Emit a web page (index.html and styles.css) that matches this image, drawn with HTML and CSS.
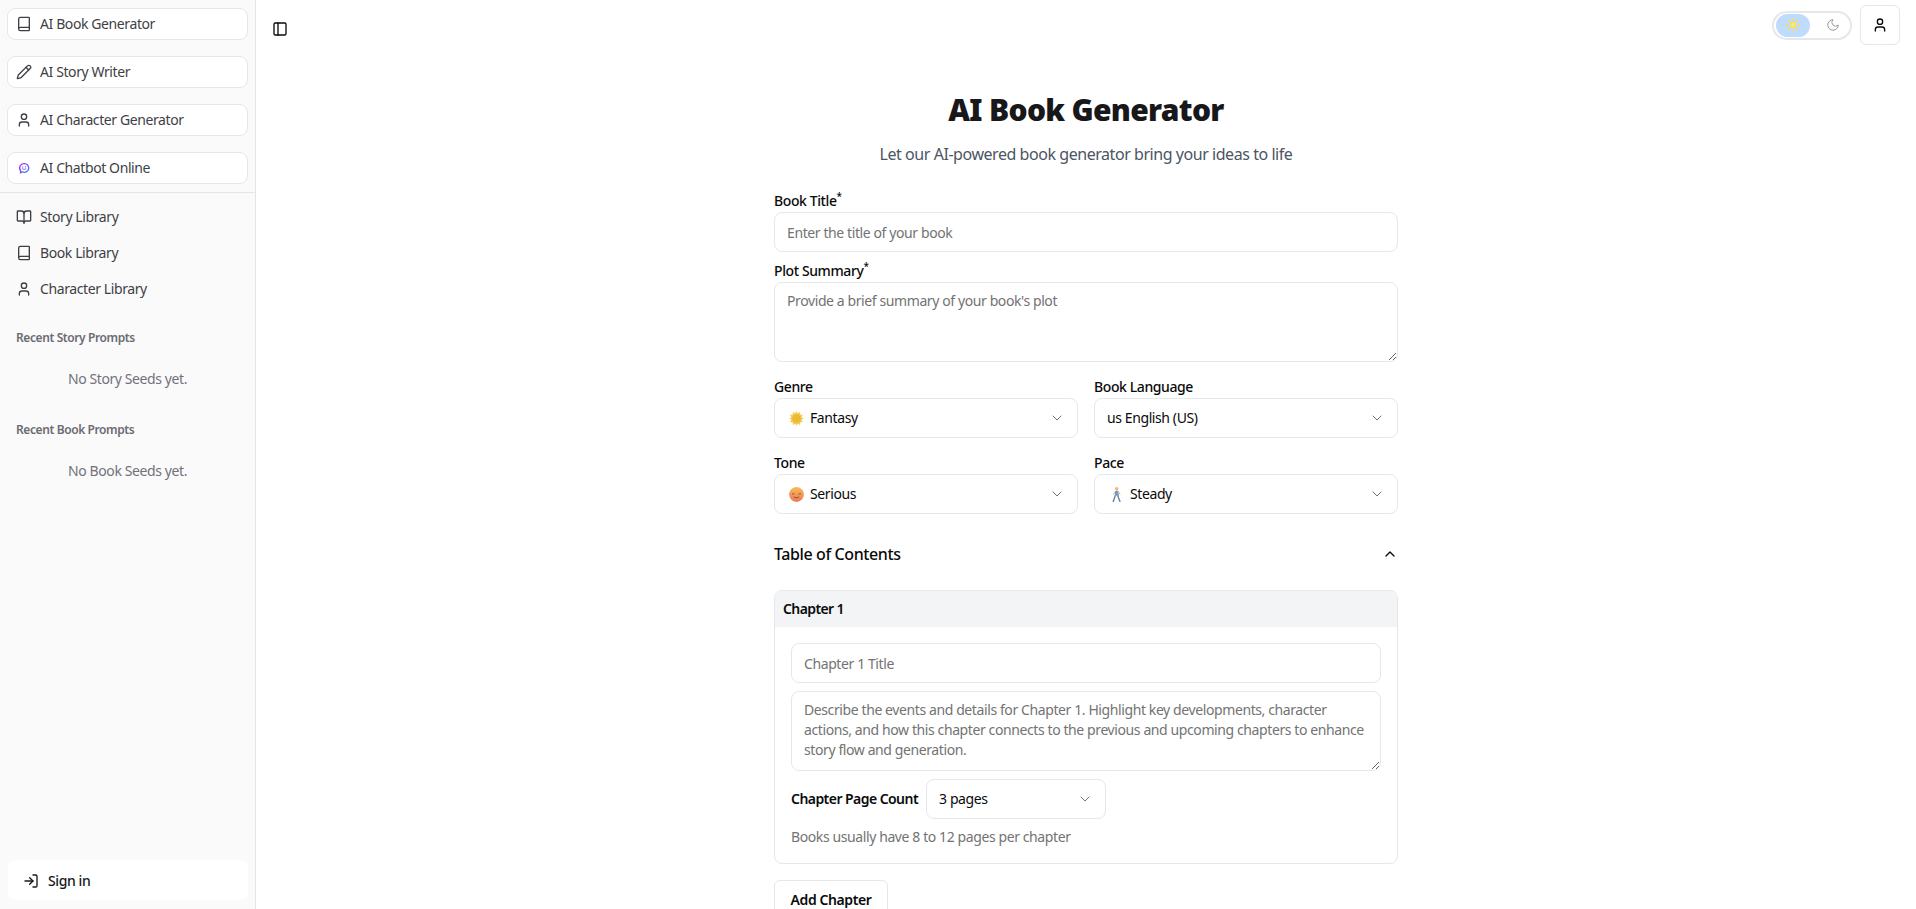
FILE: index.html
```html
<!DOCTYPE html>
<html lang="en">
<head>
  <meta charset="UTF-8">
  <meta name="viewport" content="width=device-width, initial-scale=1.0">
  <title>AI Book Generator</title>
  <link rel="stylesheet" href="styles.css">
</head>
<body>

<svg class="icon-defs" width="0" height="0">
  <symbol id="i-book" viewBox="0 0 24 24"><path d="M4 19.5v-15A2.5 2.5 0 0 1 6.5 2H19a1 1 0 0 1 1 1v18a1 1 0 0 1-1 1H6.5a1 1 0 0 1 0-5H20"/></symbol>
  <symbol id="i-pencil" viewBox="0 0 24 24"><path d="M21.174 6.812a1 1 0 0 0-3.986-3.987L3.842 16.174a2 2 0 0 0-.5.83l-1.321 4.352a.5.5 0 0 0 .623.622l4.353-1.32a2 2 0 0 0 .83-.497z"/><path d="m15 5 4 4"/></symbol>
  <symbol id="i-user" viewBox="0 0 24 24"><path d="M19 21v-2a4 4 0 0 0-4-4H9a4 4 0 0 0-4 4v2"/><circle cx="12" cy="7" r="4"/></symbol>
  <symbol id="i-open" viewBox="0 0 24 24"><path d="M12 7v14"/><path d="M3 18a1 1 0 0 1-1-1V4a1 1 0 0 1 1-1h5a4 4 0 0 1 4 4 4 4 0 0 1 4-4h5a1 1 0 0 1 1 1v13a1 1 0 0 1-1 1h-6a3 3 0 0 0-3 3 3 3 0 0 0-3-3z"/></symbol>
  <symbol id="i-down" viewBox="0 0 24 24"><path d="m6 9 6 6 6-6"/></symbol>
</svg>

<div class="app">
  <aside class="sidebar">
    <nav class="tools">
      <a class="tool"><svg class="icon"><use href="#i-book"/></svg>AI Book Generator</a>
      <a class="tool"><svg class="icon"><use href="#i-pencil"/></svg>AI Story Writer</a>
      <a class="tool"><svg class="icon"><use href="#i-user"/></svg>AI Character Generator</a>
      <a class="tool">
        <svg class="icon chat-icon" viewBox="0 0 16 16">
          <defs><linearGradient id="chatGrad" x1="0" y1="0" x2="1" y2="1"><stop offset="0" stop-color="#c026d3"/><stop offset="1" stop-color="#3b82f6"/></linearGradient></defs>
          <path d="M8.300 3.700a4.300 4.300 0 1 1-1.900 8.100L4.400 13l.3-2.200a4.300 4.300 0 0 1 3.600-7.100z" fill="none" stroke="url(#chatGrad)" stroke-width="1.300"/>
          <path d="M6.300 8.900q1.800 1.300 3.600 0" fill="none" stroke="#6366f1" stroke-width=".9"/>
          <circle cx="6.700" cy="6.900" r=".7" fill="#a855f7"/><circle cx="9.500" cy="6.900" r=".7" fill="#3b82f6"/>
        </svg>
        AI Chatbot Online
      </a>
    </nav>
    <nav class="library">
      <a class="lib-link"><svg class="icon"><use href="#i-open"/></svg>Story Library</a>
      <a class="lib-link"><svg class="icon"><use href="#i-book"/></svg>Book Library</a>
      <a class="lib-link"><svg class="icon"><use href="#i-user"/></svg>Character Library</a>
    </nav>
    <section class="recent recent-story">
      <h3>Recent Story Prompts</h3>
      <p>No Story Seeds yet.</p>
    </section>
    <section class="recent recent-book">
      <h3>Recent Book Prompts</h3>
      <p>No Book Seeds yet.</p>
    </section>
    <a class="sign-in">
      <svg class="icon" viewBox="0 0 24 24"><path d="M15 3h4a2 2 0 0 1 2 2v14a2 2 0 0 1-2 2h-4"/><path d="m10 17 5-5-5-5"/><path d="M15 12H3"/></svg>
      Sign in
    </a>
  </aside>

  <div class="main">
    <header class="topbar">
      <button class="panel-toggle">
        <svg class="icon" viewBox="0 0 24 24"><rect x="3" y="3" width="18" height="18" rx="2"/><path d="M9 3v18"/></svg>
      </button>
      <div class="topbar-right">
        <div class="theme-switch">
          <span class="theme-sun">
            <svg viewBox="0 0 24 24"><circle cx="12" cy="12" r="4"/><path d="M12 2v2M12 20v2M4.900 4.900l1.400 1.400M17.700 17.700l1.400 1.400M2 12h2M20 12h2M6.300 17.700l-1.400 1.400M19.100 4.900l-1.400 1.400"/></svg>
          </span>
          <svg class="theme-moon" viewBox="0 0 24 24"><path d="M12 3a6 6 0 0 0 9 9 9 9 0 1 1-9-9Z"/></svg>
        </div>
        <button class="user-btn"><svg class="icon"><use href="#i-user"/></svg></button>
      </div>
    </header>

    <main class="content">
      <h1>AI Book Generator</h1>
      <p class="subtitle">Let our AI-powered book generator bring your ideas to life</p>

      <form class="book-form">
        <label class="field-label">Book Title<sup>*</sup></label>
        <input class="text-input" type="text" placeholder="Enter the title of your book">

        <label class="field-label plot-label">Plot Summary<sup>*</sup></label>
        <textarea class="text-area" placeholder="Provide a brief summary of your book's plot"></textarea>

        <div class="select-grid">
          <div class="field">
            <label class="field-label">Genre</label>
            <div class="select">
              <span class="select-value">
                <svg class="emoji" viewBox="0 0 14 14">
                  <path d="M7 0l1 2.200L10.400 1l.1 2.500 2.500.1-1.200 2.400L14 7l-2.200 1 1.200 2.400-2.500.1-.1 2.500L8 11.800 7 14l-1-2.200L3.600 13l-.1-2.500-2.500-.1L2.200 8 0 7l2.200-1L1 3.600l2.500-.1L3.600 1 6 2.200z" fill="#f3cb55"/>
                  <circle cx="7" cy="7" r="4" fill="#ecb935"/>
                </svg>
                Fantasy
              </span>
              <svg class="icon chevron"><use href="#i-down"/></svg>
            </div>
          </div>
          <div class="field">
            <label class="field-label">Book Language</label>
            <div class="select">
              <span class="select-value">us English (US)</span>
              <svg class="icon chevron"><use href="#i-down"/></svg>
            </div>
          </div>
          <div class="field">
            <label class="field-label">Tone</label>
            <div class="select">
              <span class="select-value">
                <svg class="emoji" viewBox="0 0 14 14">
                  <defs><linearGradient id="faceGrad" x1="0" y1="0" x2="0" y2="1"><stop offset="0" stop-color="#f7bb58"/><stop offset="1" stop-color="#ec7a5c"/></linearGradient></defs>
                  <circle cx="7" cy="7" r="6.900" fill="url(#faceGrad)"/>
                  <path d="M2.800 6.200q1.200.9 2.400 0M8.800 6.200q1.200.9 2.400 0M4.500 9.300q2.500 1.600 5 0" fill="none" stroke="#8a4a2a" stroke-width=".8"/>
                </svg>
                Serious
              </span>
              <svg class="icon chevron"><use href="#i-down"/></svg>
            </div>
          </div>
          <div class="field">
            <label class="field-label">Pace</label>
            <div class="select">
              <span class="select-value">
                <svg class="emoji" viewBox="0 0 14 14">
                  <circle cx="7.200" cy="1.700" r="1.600" fill="#ecbc6a"/>
                  <path d="M5.700 3.600h2.900l.7 4.600H5.400z" fill="#6c9ed4"/>
                  <path d="M5.900 8l-2.100 6M8.100 8l2.300 6" fill="none" stroke="#6d8199" stroke-width="1.300"/>
                  <path d="M5.800 4L3.900 7.300M8.700 4l1.700 3" fill="none" stroke="#ecbc6a" stroke-width=".9"/>
                </svg>
                Steady
              </span>
              <svg class="icon chevron"><use href="#i-down"/></svg>
            </div>
          </div>
        </div>

        <div class="toc-head">
          <span>Table of Contents</span>
          <svg class="icon" viewBox="0 0 24 24"><path d="m18 15-6-6-6 6"/></svg>
        </div>

        <div class="chapter-card">
          <div class="chapter-head">Chapter 1</div>
          <div class="chapter-body">
            <input class="text-input" type="text" placeholder="Chapter 1 Title">
            <textarea class="text-area" placeholder="Describe the events and details for Chapter 1. Highlight key developments, character actions, and how this chapter connects to the previous and upcoming chapters to enhance story flow and generation."></textarea>
            <div class="page-count">
              <span class="field-label">Chapter Page Count</span>
              <div class="select page-select">
                <span class="select-value">3 pages</span>
                <svg class="icon chevron"><use href="#i-down"/></svg>
              </div>
            </div>
            <p class="helper">Books usually have 8 to 12 pages per chapter</p>
          </div>
        </div>

        <button class="add-chapter" type="button">Add Chapter</button>
      </form>
    </main>
  </div>
</div>

</body>
</html>
```

FILE: styles.css
```css
* {
  box-sizing: border-box;
}

html, body {
  height: 100%;
}

body {
  margin: 0;
  overflow: hidden;
  background: #fff;
  color: #0a0a0a;
  font-family: "Noto Sans", "Open Sans", sans-serif;
  font-size: 14px;
  line-height: 20px;
  letter-spacing: -0.4px;
}

.icon-defs {
  position: absolute;
}

.icon {
  width: 16px;
  height: 16px;
  flex: none;
  fill: none;
  stroke: currentColor;
  stroke-width: 2;
  stroke-linecap: round;
  stroke-linejoin: round;
}

.app {
  display: flex;
  height: 909px;
}

/* sidebar */
.sidebar {
  width: 256px;
  flex: none;
  display: flex;
  flex-direction: column;
  background: #fafafa;
  border-right: 1px solid #e5e5e5;
  color: #3f3f46;
}

.tools {
  display: flex;
  flex-direction: column;
  gap: 16px;
  padding: 8px 7px;
  border-bottom: 1px solid #e5e5e5;
}

.tool {
  display: flex;
  align-items: center;
  gap: 8px;
  height: 32px;
  padding: 0 8px;
  background: #fff;
  border: 1px solid #e5e7eb;
  border-radius: 8px;
}

.chat-icon {
  stroke: none;
}

.library {
  display: flex;
  flex-direction: column;
  padding: 6px 8px 0;
}

.lib-link {
  display: flex;
  align-items: center;
  gap: 8px;
  height: 36px;
  padding: 0 8px;
}

.recent h3 {
  margin: 0;
  padding: 0 16px;
  font-size: 12px;
  font-weight: 600;
  line-height: 16px;
  color: #6b6b73;
}

.recent p {
  margin: 23px 0 0;
  text-align: center;
  color: #71717a;
}

.recent-story {
  margin-top: 23px;
}

.recent-book {
  margin-top: 33px;
}

.sign-in {
  display: flex;
  align-items: center;
  gap: 9px;
  height: 40px;
  margin: auto 7px 9px 8px;
  padding: 2px 15px 0;
  background: #fff;
  border-radius: 8px;
  color: #18181b;
  font-weight: 500;
}

/* main column */
.main {
  flex: 1;
  min-width: 0;
}

.topbar {
  display: flex;
  justify-content: space-between;
  align-items: flex-start;
  height: 92px;
  padding: 5px 16px 0 16px;
}

.panel-toggle {
  display: flex;
  margin: 16px 0 0;
  padding: 0;
  border: 0;
  background: none;
  color: #0a0a0a;
}

.topbar-right {
  display: flex;
  align-items: center;
  gap: 8px;
}

.theme-switch {
  display: flex;
  align-items: center;
  justify-content: space-between;
  width: 80px;
  height: 29px;
  padding: 0 10px 0 2px;
  border: 2px solid #e5e7eb;
  border-radius: 15px;
  background: #fff;
}

.theme-sun {
  display: flex;
  align-items: center;
  justify-content: center;
  width: 34px;
  height: 23px;
  border-radius: 12px;
  background: #bfdbfe;
}

.theme-sun svg {
  width: 16px;
  height: 16px;
  fill: #fde68a;
  stroke: #fde047;
  stroke-width: 2;
  stroke-linecap: round;
}

.theme-moon {
  width: 14px;
  height: 14px;
  fill: none;
  stroke: #8b8b8b;
  stroke-width: 1.500;
}

.user-btn {
  display: flex;
  align-items: center;
  justify-content: center;
  width: 40px;
  height: 40px;
  padding: 0;
  background: #fff;
  border: 1px solid #e5e7eb;
  border-radius: 6px;
  color: #0a0a0a;
}

.content {
  width: 624px;
  margin: 0 auto;
}

h1 {
  margin: 0;
  font-size: 30px;
  font-weight: 900;
  line-height: 36px;
  letter-spacing: -0.7px;
  text-align: center;
  color: #18181b;
}

.subtitle {
  margin: 14px 0 25px;
  font-size: 16px;
  line-height: 24px;
  letter-spacing: -0.45px;
  text-align: center;
  color: #4b5563;
}

.book-form {
  display: flex;
  flex-direction: column;
}

.field-label {
  display: block;
  margin-bottom: 1px;
  font-weight: 500;
  color: #0a0a0a;
}

.field-label sup {
  font-size: 10px;
  line-height: 0;
}

.plot-label {
  margin-top: 9px;
}

.text-input,
.text-area {
  display: block;
  width: 100%;
  padding: 0 12px;
  background: #fff;
  border: 1px solid #e5e7eb;
  border-radius: 8px;
  color: #0a0a0a;
  font: inherit;
  letter-spacing: inherit;
  outline: none;
}

.text-input {
  height: 40px;
}

.text-area {
  height: 80px;
  padding-top: 8px;
  padding-bottom: 8px;
}

.text-input::placeholder,
.text-area::placeholder {
  color: #737373;
  opacity: 1;
}

.select-grid {
  display: grid;
  grid-template-columns: 1fr 1fr;
  gap: 15px 16px;
  margin-top: 15px;
}

.select {
  display: flex;
  align-items: center;
  justify-content: space-between;
  height: 40px;
  padding: 0 12px;
  background: #fff;
  border: 1px solid #e5e7eb;
  border-radius: 8px;
}

.select-value {
  display: flex;
  align-items: center;
  gap: 6px;
}

.emoji {
  width: 15px;
  height: 15px;
  margin-left: 2px;
  flex: none;
}

.chevron {
  color: #737373;
  stroke-width: 1.500;
}

.toc-head {
  display: flex;
  align-items: center;
  justify-content: space-between;
  height: 40px;
  margin-top: 20px;
  font-size: 16px;
  font-weight: 500;
}

.chapter-card {
  margin-top: 16px;
  border: 1px solid #e5e7eb;
  border-radius: 8px;
  overflow: hidden;
}

.chapter-head {
  height: 36px;
  padding: 8px;
  background: #f3f4f6;
  font-weight: 600;
  letter-spacing: -0.6px;
}

.chapter-body {
  display: flex;
  flex-direction: column;
  gap: 8px;
  padding: 16px;
}

.page-count {
  display: flex;
  align-items: center;
  gap: 8px;
}

.page-count .field-label {
  margin: 0;
  font-weight: 600;
  letter-spacing: -0.55px;
}

.page-select {
  width: 180px;
}

.helper {
  margin: 0;
  color: #737373;
}

.add-chapter {
  align-self: flex-start;
  width: 114px;
  height: 40px;
  margin-top: 16px;
  background: #fff;
  border: 1px solid #e5e7eb;
  border-radius: 6px;
  color: #0a0a0a;
  font: inherit;
  letter-spacing: inherit;
  font-weight: 600;
}
```
